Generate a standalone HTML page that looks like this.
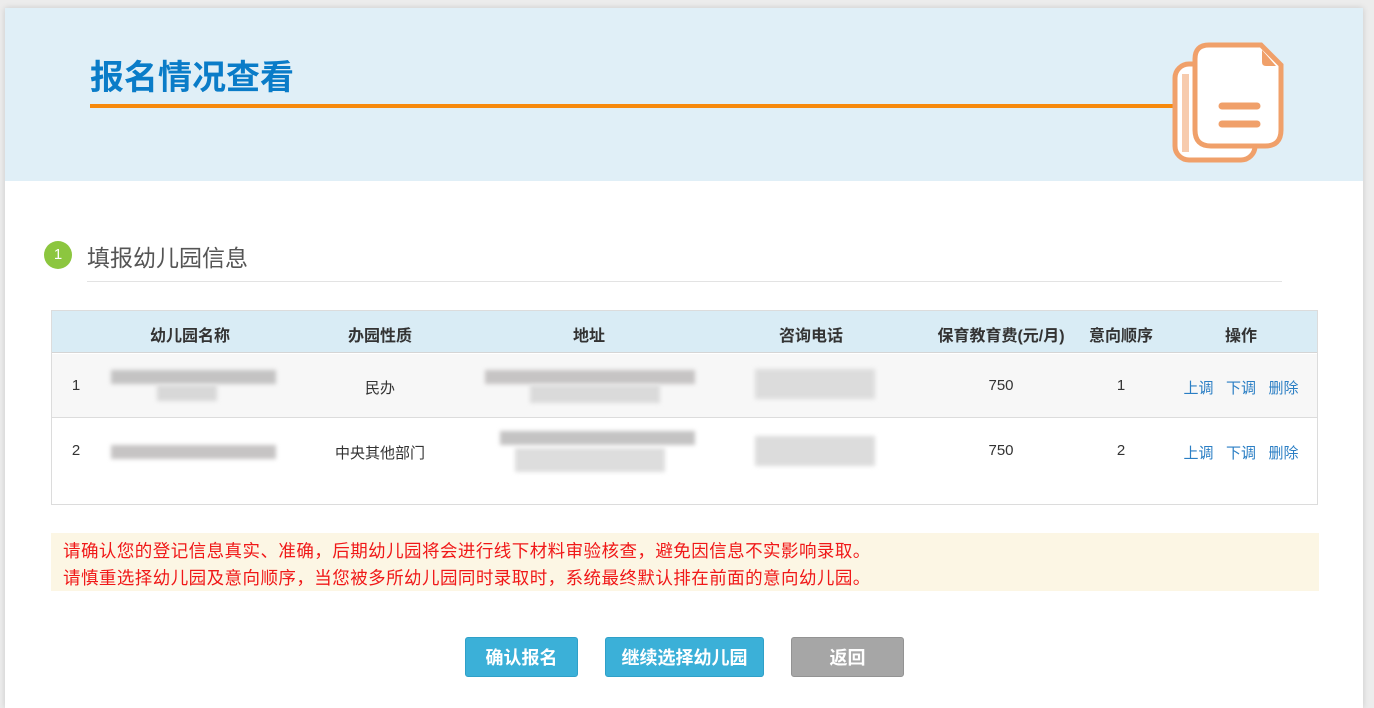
<!DOCTYPE html>
<html><head><meta charset="utf-8"><style>
*{margin:0;padding:0;box-sizing:border-box}
body{width:1374px;height:692px;background:#ececec;font-family:"Liberation Sans","Noto Sans CJK SC",sans-serif;position:relative;overflow:hidden}
.card{position:absolute;left:5px;top:8px;width:1358px;height:700px;background:#fff;box-shadow:0 0 6px rgba(0,0,0,.15)}
.hdr{position:absolute;left:0;top:0;width:1358px;height:173px;background:#e0eff7}
.title{position:absolute;left:85px;top:42px;font-size:34px;font-weight:bold;color:#0a7cc8}
.oline{position:absolute;left:85px;top:96px;width:1100px;height:4px;background:#f7890c}
.abs{position:absolute}
.tbl{position:absolute;left:46px;top:302px;width:1267px;height:195px;border:1px solid #dcdcdc}
.cell{position:absolute;font-size:15px;color:#333;text-align:center;transform:translateX(-50%);white-space:nowrap}
.th{font-weight:bold;font-size:16px}
.op{color:#2a7ec4;font-size:15px}
.blur{position:absolute;background:#cfcfcf;filter:blur(2px)}
.btn{position:absolute;top:629px;height:40px;border-radius:3px;color:#fff;font-weight:bold;font-size:18px;text-align:center;line-height:40px}
</style></head><body>
<div class="card">
<div class="hdr"></div>
<div class="title">报名情况查看</div>
<div class="oline"></div>
<svg class="abs" style="left:1160px;top:30px" width="125" height="130" viewBox="0 0 125 130">
<rect x="10" y="26" width="80" height="96" rx="14" fill="#fff" stroke="#f0a06a" stroke-width="5"/>
<rect x="17" y="36" width="7" height="78" fill="#f0a06a" opacity=".55"/>
<path d="M44 7 H96 L116 27 V92 Q116 108 100 108 H46 Q30 108 30 92 V21 Q30 7 44 7 Z" fill="#fff" stroke="#f0a06a" stroke-width="5"/>
<path d="M97 12 L111 28 H101 Q97 28 97 24 Z" fill="#f0a06a"/>
<line x1="57" y1="68" x2="92" y2="68" stroke="#f0a06a" stroke-width="7" stroke-linecap="round"/>
<line x1="57" y1="86" x2="92" y2="86" stroke="#f0a06a" stroke-width="7" stroke-linecap="round"/>
</svg>
<div class="abs" style="left:39px;top:233px;width:28px;height:28px;border-radius:50%;background:#8cc63f;color:#fff;font-size:15px;text-align:center;line-height:28px">1</div>
<div class="abs" style="left:82px;top:231px;font-size:23px;color:#555">填报幼儿园信息</div>
<div class="abs" style="left:82px;top:273px;width:1195px;height:1px;background:#e3e3e3"></div>

<div class="tbl">
<div class="abs" style="left:0;top:0;width:1265px;height:42px;background:#d9ecf5;border-bottom:1px solid #d5d5d5"></div>
<div class="abs" style="left:0;top:43px;width:1265px;height:64px;background:#f7f7f7;border-bottom:1px solid #dcdcdc"></div>
<div class="cell th" style="left:138px;top:11px">幼儿园名称</div>
<div class="cell th" style="left:328px;top:11px">办园性质</div>
<div class="cell th" style="left:537px;top:11px">地址</div>
<div class="cell th" style="left:759px;top:11px">咨询电话</div>
<div class="cell th" style="left:949px;top:11px">保育教育费(元/月)</div>
<div class="cell th" style="left:1069px;top:11px">意向顺序</div>
<div class="cell th" style="left:1189px;top:11px">操作</div>

<div class="cell" style="left:24px;top:66px">1</div>
<div class="cell" style="left:328px;top:66px">民办</div>
<div class="cell" style="left:949px;top:66px">750</div>
<div class="cell" style="left:1069px;top:66px">1</div>
<div class="cell op" style="left:1189px;top:66px">上调&nbsp;&nbsp;&nbsp;下调&nbsp;&nbsp;&nbsp;删除</div>

<div class="cell" style="left:24px;top:131px">2</div>
<div class="cell" style="left:328px;top:131px">中央其他部门</div>
<div class="cell" style="left:949px;top:131px">750</div>
<div class="cell" style="left:1069px;top:131px">2</div>
<div class="cell op" style="left:1189px;top:131px">上调&nbsp;&nbsp;&nbsp;下调&nbsp;&nbsp;&nbsp;删除</div>

<div class="blur" style="left:59px;top:59px;width:165px;height:14px;background:#c4c3c3"></div>
<div class="blur" style="left:105px;top:74px;width:60px;height:16px;background:#d8d8d8"></div>
<div class="blur" style="left:433px;top:59px;width:210px;height:14px;background:#c6c4c4"></div>
<div class="blur" style="left:478px;top:74px;width:130px;height:18px;background:#dadada"></div>
<div class="blur" style="left:703px;top:58px;width:120px;height:30px;background:#dcdcdc"></div>
<div class="blur" style="left:59px;top:134px;width:165px;height:14px;background:#c6c4c4"></div>
<div class="blur" style="left:448px;top:120px;width:195px;height:14px;background:#c4c3c3"></div>
<div class="blur" style="left:463px;top:137px;width:150px;height:24px;background:#dddddd"></div>
<div class="blur" style="left:703px;top:125px;width:120px;height:30px;background:#dcdcdc"></div>
</div>

<div class="abs" style="left:46px;top:525px;width:1268px;height:58px;background:#fcf6e4"></div>
<div class="abs" style="left:58px;top:530px;font-size:17.5px;letter-spacing:0.45px;color:#f01818;line-height:27px;white-space:nowrap">请确认您的登记信息真实、准确，后期幼儿园将会进行线下材料审验核查，避免因信息不实影响录取。<br>请慎重选择幼儿园及意向顺序，当您被多所幼儿园同时录取时，系统最终默认排在前面的意向幼儿园。</div>

<div class="btn" style="left:460px;width:113px;background:#3bb0d8;border:1px solid #2fa0c8">确认报名</div>
<div class="btn" style="left:600px;width:159px;background:#3bb0d8;border:1px solid #2fa0c8">继续选择幼儿园</div>
<div class="btn" style="left:786px;width:113px;background:#a6a6a6;border:1px solid #939393">返回</div>
</div>
</body></html>
